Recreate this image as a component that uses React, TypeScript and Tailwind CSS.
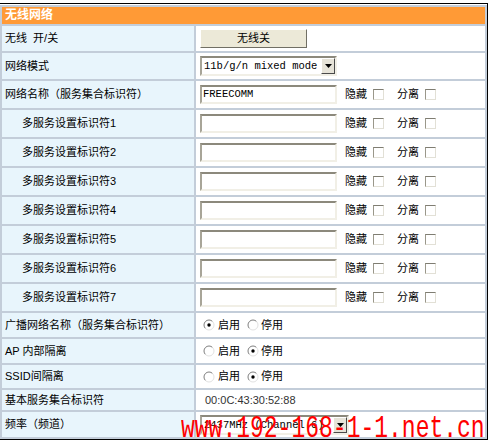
import React from 'react';

const sans = "font-['Liberation_Sans','Noto_Sans_CJK_SC',sans-serif]";
const mono = "font-['Liberation_Mono','Noto_Sans_CJK_SC',monospace]";

const Checkbox = () => (
  <span className="inline-block w-[11px] h-[11px] bg-white border border-t-[#7f7d72] border-l-[#9a978a] border-r-[#e2e0d6] border-b-[#e2e0d6]" />
);

const Radio = ({ checked }: { checked?: boolean }) => (
  <svg width="12" height="12" viewBox="0 0 12 12" className="shrink-0">
    <circle cx="6" cy="6" r="5" fill="#fff" />
    <path d="M2.46 9.54 A5 5 0 0 1 9.54 2.46" stroke="#7e7e7e" strokeWidth="1" fill="none" />
    <path d="M9.54 2.46 A5 5 0 0 1 2.46 9.54" stroke="#e2e2e2" strokeWidth="1" fill="none" />
    {checked && <circle cx="6" cy="6" r="1.7" fill="#000" />}
  </svg>
);

const TextBox = ({ value }: { value?: string }) => (
  <div
    className={`w-[137px] h-[19px] bg-white border-2 border-t-[#8c897c] border-l-[#a8a598] border-r-[#f1efe6] border-b-[#f1efe6] pl-[1px] text-[10.5px] leading-[15px] text-black ${mono}`}
  >
    {value}
  </div>
);

const Select = ({ value, width }: { value: string; width: string }) => (
  <div
    className={`${width} h-[20px] bg-white border-2 border-t-[#8c897c] border-l-[#a8a598] border-r-[#f1efe6] border-b-[#f1efe6] flex items-center`}
  >
    <span className={`flex-1 pl-[2px] text-[10.5px] leading-[16px] text-black whitespace-nowrap ${mono}`}>{value}</span>
    <span className="w-[14px] h-[16px] bg-[#e6e3d8] border border-t-white border-l-white border-r-[#4a4a4a] border-b-[#4a4a4a] flex items-center justify-center">
      <svg width="7" height="4" viewBox="0 0 7 4">
        <path d="M0 0h7L3.5 4z" fill="#000" />
      </svg>
    </span>
  </div>
);

const Label = ({ children, sub, h }: { children: React.ReactNode; sub?: boolean; h: string }) => (
  <td className={`${h} w-[192px] p-0 bg-[#e8f5fc] align-middle text-[11px] text-black whitespace-nowrap ${sub ? 'pl-[20px]' : 'pl-[3px]'}`}>
    {children}
  </td>
);

const SsidRow = ({ label, value, sub }: { label: string; value?: string; sub?: boolean }) => (
  <tr>
    <Label h="h-[27px]" sub={sub}>{label}</Label>
    <td className="p-0 pl-[4px] bg-white align-middle">
      <div className="flex items-center text-[11px]">
        <TextBox value={value} />
        <span className="ml-[8px]">隐藏</span>
        <span className="ml-[6px] flex"><Checkbox /></span>
        <span className="ml-[13px]">分离</span>
        <span className="ml-[6px] flex"><Checkbox /></span>
      </div>
    </td>
  </tr>
);

const RadioRow = ({ label, on, h }: { label: string; on: boolean; h: string }) => (
  <tr>
    <Label h={h}>{label}</Label>
    <td className="p-0 pl-[7px] bg-white align-middle">
      <div className="flex items-center text-[11px]">
        <Radio checked={on} />
        <span className="ml-[3px]">启用</span>
        <span className="ml-[7px] flex"><Radio checked={!on} /></span>
        <span className="ml-[2px]">停用</span>
      </div>
    </td>
  </tr>
);

export default function App() {
  const subs = [1, 2, 3, 4, 5, 6, 7];
  return (
    <div className={`relative w-[489px] h-[443px] bg-white overflow-hidden pt-[3px] ${sans}`}>
      <div className="w-[488px] border-t border-r border-b border-black bg-white pt-px">
        <table className="w-[487px] border-separate border-spacing-[2px] bg-[#c3cdd9]">
          <tbody>
            <tr>
              <td colSpan={2} className="h-[17px] p-0 pl-[3px] bg-[#ff9a36] text-white font-bold text-[12px] leading-[17px]">
                无线网络
              </td>
            </tr>
            <tr>
              <Label h="h-[25px]">无线&nbsp;&nbsp;开/关</Label>
              <td className="p-0 pl-[4px] bg-white align-middle">
                <div className="w-[107px] h-[19px] bg-[#ece9d8] border border-t-white border-l-white border-r-[#716f64] border-b-[#716f64] flex items-center justify-center text-[11px] text-black">
                  无线关
                </div>
              </td>
            </tr>
            <tr>
              <Label h="h-[26px]">网络模式</Label>
              <td className="p-0 pl-[4px] bg-white align-middle">
                <Select value="11b/g/n mixed mode" width="w-[137px]" />
              </td>
            </tr>
            <SsidRow label="网络名称（服务集合标识符）" value="FREECOMM" />
            {subs.map((n) => (
              <SsidRow key={n} label={`多服务设置标识符${n}`} sub />
            ))}
            <RadioRow label="广播网络名称（服务集合标识符）" on={true} h="h-[24px]" />
            <RadioRow label="AP 内部隔离" on={false} h="h-[24px]" />
            <RadioRow label="SSID间隔离" on={false} h="h-[23px]" />
            <tr>
              <Label h="h-[20px]">基本服务集合标识符</Label>
              <td className="p-0 pl-[9px] bg-white align-middle text-[11px] text-[#333333]">00:0C:43:30:52:88</td>
            </tr>
            <tr>
              <Label h="h-[25px]">频率（频道）</Label>
              <td className="p-0 pl-[4px] bg-white align-middle">
                <Select value="2437MHz (Channel 6)" width="w-[149px]" />
              </td>
            </tr>
          </tbody>
        </table>
      </div>
      <div className={`absolute left-[181px] top-[422px] leading-none text-[23px] text-[#ff0000] whitespace-nowrap origin-bottom scale-y-[1.4] ${mono}`}>
        www.192-168-1-1.net.cn
      </div>
    </div>
  );
}
